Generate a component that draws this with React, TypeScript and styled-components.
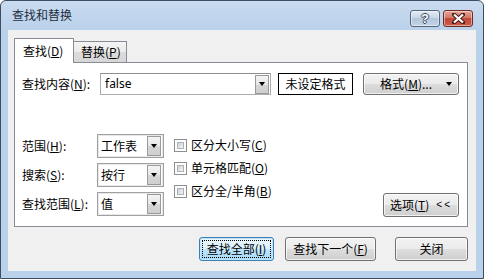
import React from "react";
import styled, { createGlobalStyle, css } from "styled-components";

const GlobalStyle = createGlobalStyle`
  html, body {
    margin: 0;
    padding: 0;
    background: #ffffff;
  }
  body {
    font-family: "Noto Sans CJK SC", "Liberation Sans", sans-serif;
    font-size: 12px;
    color: #000;
  }
`;

const Window = styled.div`
  width: 484px;
  height: 279px;
  box-sizing: border-box;
  border: 1px solid #3e4d60;
  border-radius: 6px 6px 0 0;
  background: linear-gradient(#c9dbef, #b9d1ea 30px, #b9d1ea);
  display: flex;
  flex-direction: column;
  overflow: hidden;
`;

const TitleBar = styled.div`
  height: 29px;
  flex: none;
  display: flex;
  align-items: flex-start;
  padding: 0 10px 0 11px;
`;

const TitleText = styled.div`
  line-height: 16px;
  margin-top: 6px;
  color: #1e2d3f;
  font-size: 12px;
`;

const CaptionButtons = styled.div`
  margin-left: auto;
  margin-top: 9px;
  display: flex;
  gap: 3px;
`;

const CaptionButton = styled.div<{ $close?: boolean }>`
  width: 30px;
  height: 17px;
  box-sizing: border-box;
  border: 1px solid ${(p) => (p.$close ? "#6e2b24" : "#56667a")};
  border-radius: 3px;
  display: flex;
  align-items: center;
  justify-content: center;
  box-shadow: inset 0 0 0 1px rgba(255, 255, 255, 0.45);
  background: ${(p) =>
    p.$close
      ? "linear-gradient(#e6a497, #d17a6a 45%, #c2483a 50%, #c95a4a)"
      : "linear-gradient(#e3ebf5, #c9d7e8 45%, #b3c6dc 50%, #c4d4e6)"};
`;

const HelpGlyph = styled.span`
  font-family: "Liberation Sans", sans-serif;
  font-weight: bold;
  font-size: 13px;
  line-height: 13px;
  color: #fff;
  text-shadow: 1px 0 0 #33475e, -1px 0 0 #33475e, 0 1px 0 #33475e, 0 -1px 0 #33475e;
`;

const Client = styled.div`
  flex: 1;
  margin: 0 7px 7px 7px;
  background: #f0f0f0;
  padding: 8px 8px 0 6px;
  display: flex;
  flex-direction: column;
`;

const TabStrip = styled.div`
  height: 24px;
  display: flex;
  align-items: flex-end;
`;

const Tab = styled.div<{ $active?: boolean }>`
  box-sizing: border-box;
  border: 1px solid #898c95;
  border-bottom: none;
  display: flex;
  align-items: center;
  line-height: 16px;
  ${(p) =>
    p.$active
      ? css`
          width: 60px;
          height: 25px;
          margin-bottom: -1px;
          background: #fff;
          padding: 0 0 1px 8px;
          position: relative;
          z-index: 1;
        `
      : css`
          width: 54px;
          height: 21px;
          margin-left: -1px;
          background: linear-gradient(#f3f3f3, #ebebeb 50%, #dcdcdc 51%, #d6d6d6);
          padding: 0 0 0 7px;
        `}
`;

const Panel = styled.div`
  height: 165px;
  box-sizing: border-box;
  border: 1px solid #898c95;
  background: #fff;
  padding: 10px 8px 0 7px;
  display: flex;
  flex-direction: column;
`;

const FindRow = styled.div`
  display: flex;
  align-items: center;
  height: 22px;
`;

const Label = styled.div<{ $w: number }>`
  width: ${(p) => p.$w}px;
  flex: none;
  line-height: 16px;
`;

const ComboInput = styled.div`
  width: 171px;
  height: 22px;
  box-sizing: border-box;
  border: 1px solid #abadb3;
  border-top-color: #8e8f8f;
  display: flex;
  align-items: center;
  padding: 0 1px 0 4px;
  background: #fff;
`;

const ComboText = styled.div`
  flex: 1;
  line-height: 16px;
  font-family: "Noto Sans", "Liberation Sans", sans-serif;
`;

const DropButton = styled.div<{ $h: number }>`
  width: 14px;
  height: ${(p) => p.$h}px;
  box-sizing: border-box;
  border: 1px solid #9a9a9a;
  background: linear-gradient(#f4f4f4, #e6e6e6 50%, #d6d6d6 51%, #cfcfcf);
  display: flex;
  align-items: center;
  justify-content: center;
`;

const Arrow = styled.div`
  width: 0;
  height: 0;
  border-left: 3.5px solid transparent;
  border-right: 3.5px solid transparent;
  border-top: 4px solid #000;
`;

const FormatBox = styled.div`
  width: 75px;
  height: 22px;
  box-sizing: border-box;
  margin-left: 7px;
  border: 1px solid #000;
  background: #fff;
  display: flex;
  align-items: center;
  justify-content: center;
  line-height: 16px;
`;

const Button = styled.div<{ $w: number; $h?: number; $ml?: number; $focused?: boolean }>`
  width: ${(p) => p.$w}px;
  height: ${(p) => p.$h ?? 24}px;
  margin-left: ${(p) => p.$ml ?? 0}px;
  box-sizing: border-box;
  flex: none;
  border: 1px solid ${(p) => (p.$focused ? "#3c7fb1" : "#707070")};
  border-radius: 3px;
  background: ${(p) =>
    p.$focused
      ? "linear-gradient(#eaf6fd, #d9f0fc 50%, #bee6fd 51%, #a7d9f5)"
      : "linear-gradient(#f2f2f2, #ebebeb 50%, #dddddd 51%, #cfcfcf)"};
  box-shadow: inset 0 0 0 1px ${(p) => (p.$focused ? "#c0e5fb" : "rgba(255,255,255,0.7)")};
  display: flex;
  align-items: center;
  justify-content: center;
  line-height: 16px;
  position: relative;
  ${(p) =>
    p.$focused &&
    css`
      &::after {
        content: "";
        position: absolute;
        inset: 2px;
        border: 1px dotted #000;
      }
    `}
`;

const FormatButton = styled(Button)`
  padding: 0 6px 0 0;
  justify-content: flex-end;
  gap: 14px;
`;

const Lower = styled.div`
  margin-top: 39px;
  display: flex;
  align-items: flex-start;
`;

const Fields = styled.div`
  display: flex;
  flex-direction: column;
  gap: 5px;
`;

const FieldRow = styled.div`
  display: flex;
  align-items: center;
`;

const Select = styled.div`
  width: 67px;
  height: 24px;
  box-sizing: border-box;
  border: 1px solid #a0a0a0;
  box-shadow: inset 0 0 0 1px #e8e8e8;
  background: #fff;
  display: flex;
  align-items: center;
  padding: 0 2px 0 3px;
`;

const SelectText = styled.div`
  flex: 1;
  line-height: 16px;
`;

const Checks = styled.div`
  margin-left: 10px;
  padding-top: 3px;
  display: flex;
  flex-direction: column;
  gap: 7px;
`;

const CheckRow = styled.div`
  display: flex;
  align-items: center;
  gap: 4px;
  height: 16px;
  line-height: 16px;
`;

const CheckBox = styled.div`
  width: 13px;
  height: 13px;
  box-sizing: border-box;
  border: 1px solid #8e8f8f;
  background: #fff;
  padding: 2px;
  &::before {
    content: "";
    display: block;
    width: 7px;
    height: 7px;
    background: linear-gradient(135deg, #cbcfd5, #f6f6f6);
    border: 1px solid #adb2b5;
    box-sizing: border-box;
  }
`;

const OptionsButton = styled(Button)`
  margin-left: auto;
  align-self: flex-end;
  margin-bottom: -1px;
  gap: 7px;
`;

const Chevrons = styled.span`
  font-family: "Liberation Sans", sans-serif;
  font-size: 10px;
  letter-spacing: 2px;
`;

const Footer = styled.div`
  margin-top: 10px;
  display: flex;
  justify-content: flex-end;
`;

const Key = styled.u`
  text-underline-offset: 1px;
`;

const CloseGlyph = () => (
  <svg width="13" height="11" viewBox="0 0 13 11">
    <path
      d="M2 1.5 L11 9.5 M11 1.5 L2 9.5"
      stroke="#4a1a14"
      strokeWidth="4"
      strokeLinecap="square"
    />
    <path d="M2 1.5 L11 9.5 M11 1.5 L2 9.5" stroke="#fff" strokeWidth="2.2" />
  </svg>
);

const fields = [
  { label: "范围", key: "H", value: "工作表" },
  { label: "搜索", key: "S", value: "按行" },
  { label: "查找范围", key: "L", value: "值" },
];

const checks = [
  { label: "区分大小写", key: "C" },
  { label: "单元格匹配", key: "O" },
  { label: "区分全/半角", key: "B" },
];

export default function App() {
  return (
    <>
      <GlobalStyle />
      <Window>
        <TitleBar>
          <TitleText>查找和替换</TitleText>
          <CaptionButtons>
            <CaptionButton>
              <HelpGlyph>?</HelpGlyph>
            </CaptionButton>
            <CaptionButton $close>
              <CloseGlyph />
            </CaptionButton>
          </CaptionButtons>
        </TitleBar>
        <Client>
          <TabStrip>
            <Tab $active>
              查找(<Key>D</Key>)
            </Tab>
            <Tab>
              替换(<Key>P</Key>)
            </Tab>
          </TabStrip>
          <Panel>
            <FindRow>
              <Label $w={78}>
                查找内容(<Key>N</Key>):
              </Label>
              <ComboInput>
                <ComboText>false</ComboText>
                <DropButton $h={19}>
                  <Arrow />
                </DropButton>
              </ComboInput>
              <FormatBox>未设定格式</FormatBox>
              <FormatButton $w={96} $h={22} $ml={10}>
                <span>
                  格式(<Key>M</Key>)...
                </span>
                <Arrow />
              </FormatButton>
            </FindRow>
            <Lower>
              <Fields>
                {fields.map((f) => (
                  <FieldRow key={f.key}>
                    <Label $w={75}>
                      {f.label}(<Key>{f.key}</Key>):
                    </Label>
                    <Select>
                      <SelectText>{f.value}</SelectText>
                      <DropButton $h={20}>
                        <Arrow />
                      </DropButton>
                    </Select>
                  </FieldRow>
                ))}
              </Fields>
              <Checks>
                {checks.map((c) => (
                  <CheckRow key={c.key}>
                    <CheckBox />
                    <span>
                      {c.label}(<Key>{c.key}</Key>)
                    </span>
                  </CheckRow>
                ))}
              </Checks>
              <OptionsButton $w={76}>
                <span>
                  选项(<Key>T</Key>)
                </span>
                <Chevrons>&lt;&lt;</Chevrons>
              </OptionsButton>
            </Lower>
          </Panel>
          <Footer>
            <Button $w={75} $focused>
              <span>
                查找全部(<Key>I</Key>)
              </span>
            </Button>
            <Button $w={91} $ml={11}>
              <span>
                查找下一个(<Key>F</Key>)
              </span>
            </Button>
            <Button $w={73} $ml={19}>
              关闭
            </Button>
          </Footer>
        </Client>
      </Window>
    </>
  );
}
